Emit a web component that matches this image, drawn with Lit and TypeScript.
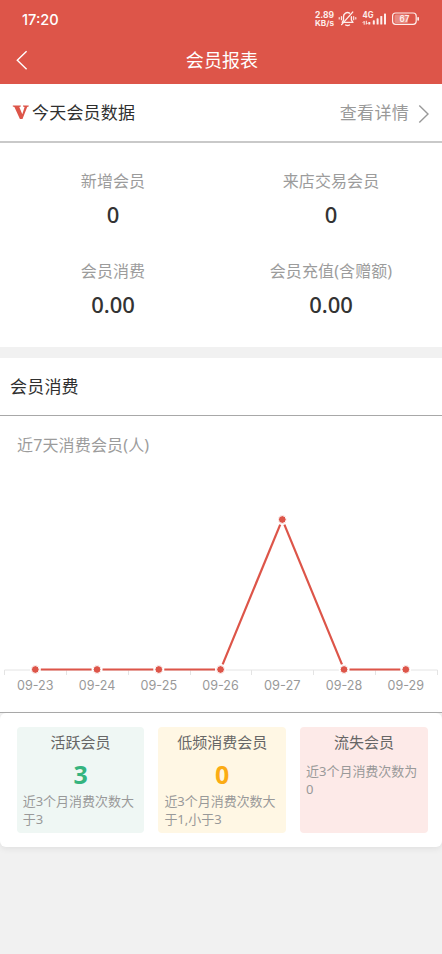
import { LitElement, html, svg, css } from "lit";
import { customElement } from "lit/decorators.js";

const DAYS = [
  { label: "09-23", value: 0 },
  { label: "09-24", value: 0 },
  { label: "09-25", value: 0 },
  { label: "09-26", value: 0 },
  { label: "09-27", value: 1 },
  { label: "09-28", value: 0 },
  { label: "09-29", value: 0 },
];

@customElement("status-bar")
class StatusBar extends LitElement {
  static styles = css`
    :host { display: flex; height: 36px; padding: 2px 23px 0 22px; align-items: center; color: #fff; box-sizing: border-box; }
    .time { flex: 1; font: 500 14.6px/20px Inter, sans-serif; letter-spacing: 0; padding-top: 2px; }
    .icons { display: block; }
    .tiny { font: 700 8.4px Inter, sans-serif; fill: #fdeeec; }
    .unit { font-size: 7.6px; }
    .pct { font: 600 9.4px Inter, sans-serif; fill: #fdeeec; }
  `;
  render() {
    return html`
      <span class="time">17:20</span>
      <svg class="icons" width="107" height="20" viewBox="312 10 107 20" fill="none" stroke="#fdeeec">
        <g stroke="none">
          <text class="tiny" x="315" y="19" textLength="19" lengthAdjust="spacingAndGlyphs">2.89</text>
          <text class="tiny unit" x="315" y="27" textLength="19" lengthAdjust="spacingAndGlyphs">KB/s</text>
          <text class="tiny" x="362.5" y="19" textLength="11" lengthAdjust="spacingAndGlyphs">4G</text>
        </g>
        <g stroke-width="1.4" stroke-linecap="round" stroke-linejoin="round">
          <path d="M342.3 23.4h10.6l-1.5-2.4v-3.3M349.6 14.2a4 4 0 0 0-6.1 3.5v3.3l-1.2 2.4" />
          <path d="M352.7 13.1 341.6 25.6M345.7 26q1.8 1.1 3.8 0" />
          <path d="M341.4 17.6v3.2M339.2 18.5v1.4M353.7 17.6v3.2M355.8 18.5v1.4" stroke-width="1.1" />
        </g>
        <path d="M364.2 25.7v-3.4l-1.5 1.5M366.3 21.8v3.5l1.4-1.4" stroke-width="1" />
        <g fill="#fdeeec" stroke="none">
          <rect x="368.3" y="23" width="2" height="2.6" rx=".6" />
          <rect x="372.8" y="21.3" width="2" height="4.3" rx=".6" />
          <rect x="376.6" y="19.3" width="2" height="6.3" rx=".6" />
          <rect x="380.3" y="16.9" width="2" height="8.7" rx=".6" />
          <rect x="384" y="14.5" width="2" height="11.1" rx=".6" />
          <rect x="394.5" y="15.4" width="13.5" height="8.7" rx="1.5" fill-opacity=".35" />
          <rect x="417.3" y="18" width="1.7" height="3.8" rx=".8" />
        </g>
        <rect x="392.6" y="14" width="23.6" height="11.3" rx="3" stroke-width="1.2" />
        <text class="pct" x="399.5" y="23.2" stroke="none" textLength="9.8" lengthAdjust="spacingAndGlyphs">67</text>
      </svg>
    `;
  }
}

@customElement("visit-chart")
class VisitChart extends LitElement {
  static styles = css`
    :host { display: block; }
    .plot { display: block; }
    .axis { stroke: #e4e4e4; stroke-width: 1; fill: none; }
    .line { stroke: #dd5549; stroke-width: 2.2; }
    .dot { fill: #dd5549; stroke: #fff; stroke-width: 1; }
    .label { font: 400 13px Inter, sans-serif; fill: #999; text-anchor: middle; }
  `;
  render() {
    const pts = DAYS.map((d, i) => ({ ...d, x: 35.3 + i * 61.75, y: 199.5 - d.value * 150 }));
    const segments = pts.slice(1).map((b, i) => {
      const a = pts[i];
      const len = Math.hypot(b.x - a.x, b.y - a.y);
      const dx = ((b.x - a.x) / len) * 5.5;
      const dy = ((b.y - a.y) / len) * 5.5;
      return svg`<line class="line" x1=${a.x + dx} y1=${a.y + dy} x2=${b.x - dx} y2=${b.y - dy} />`;
    });
    return html`<svg class="plot" width="442" height="242" viewBox="0 0 442 242">
      <path class="axis" d="M4.5 200H437.5" />
      ${Array.from({ length: 8 }, (_, i) => svg`<path class="axis" d=${`M${Math.round(4.3 + i * 61.75) + 0.5} 200v5`} />`)}
      ${pts.map((p) => svg`<circle cx=${p.x} cy=${p.y} r="5.3" fill="#fff" />`)}
      ${segments}
      ${pts.map((p) => svg`<circle class="dot" cx=${p.x} cy=${p.y} r="3.9" />
        <text class="label" x=${p.x} y="219.7" textLength="36.5" lengthAdjust="spacingAndGlyphs">${p.label}</text>`)}
    </svg>`;
  }
}

@customElement("app-root")
class AppRoot extends LitElement {
  static styles = css`
    :host { display: block; width: 442px; height: 954px; overflow: hidden; background: #f1f1f1; font-family: "Noto Sans", "Noto Sans CJK SC", sans-serif; color: #333; }
    .top { background: #dd5549; height: 84px; }
    .nav { height: 46px; display: grid; grid-template-columns: 46px 1fr 44px; align-items: center; color: #fff; }
    .title { text-align: center; font: 400 18px/24px "Noto Sans CJK SC", sans-serif; letter-spacing: .1px; }
    .back { display: block; margin: 2px 0 0 15px; }
    .panel { background: #fff; }
    .head { display: flex; align-items: center; height: 59px; box-sizing: border-box; border-bottom: 2px solid #c9c9c9; padding: 0 11px 0 12px; font-size: 17px; line-height: 24px; letter-spacing: .2px; }
    .mark { display: block; margin: -1px 3px 0 0; }
    .grow { flex: 1; color: #2f2f2f; }
    .more { color: #999; letter-spacing: .3px; }
    .chev { margin: 3px 0 0 8px; display: block; }
    .stats { display: grid; grid-template-columns: 226px 210px; grid-auto-rows: 90px; height: 204px; padding-top: 27px; box-sizing: border-box; }
    .stat { text-align: center; }
    .name { font-size: 16px; line-height: 22px; color: #9c9c9c; letter-spacing: .1px; }
    .num { font-weight: 500; font-size: 22px; line-height: 28px; margin-top: 8px; }
    .second { margin-top: 11px; }
    .second .head { padding-left: 10px; border-bottom: 1px solid #a8a8a8; height: 58px; }
    .sub { height: 54px; padding: 18px 0 0 17px; box-sizing: border-box; font-size: 16px; line-height: 22px; color: #9c9c9c; letter-spacing: .15px; }
    .divide { height: 1px; background: #ababab; }
    .cards { display: grid; grid-template-columns: repeat(3, 127.7px); gap: 14px; padding: 14px 0 14px 16.7px; background: #fff; border-radius: 6px; box-shadow: 0 2px 6px #00000012; }
    .card { height: 106px; box-sizing: border-box; border-radius: 4px; padding: 4px 6px 0; }
    .green { background: #eff7f4; }
    .yellow { background: #fff7e4; }
    .red { background: #fdeae8; }
    .kind { font-size: 15px; line-height: 22px; text-align: center; color: #666; }
    .count { font: 700 25px/30px "Noto Sans", sans-serif; text-align: center; margin: 6px 0 4px; }
    .green .count { color: #35b47e; }
    .yellow .count { color: #fbac14; }
    .note { font-size: 13px; line-height: 17.5px; color: #999; letter-spacing: -.03px; white-space: nowrap; margin-top: 10px; }
    .count + .note { margin-top: 0; }
  `;
  private stat(name: string, value: string) {
    return html`<div class="stat"><div class="name">${name}</div><div class="num">${value}</div></div>`;
  }
  private card(tone: string, kind: string, count: string, first: string, rest: string) {
    return html`<div class="card ${tone}">
      <div class="kind">${kind}</div>
      ${count ? html`<div class="count">${count}</div>` : null}
      <div class="note">${first}<br />${rest}</div>
    </div>`;
  }
  render() {
    return html`
      <header class="top">
        <status-bar></status-bar>
        <div class="nav">
          <svg class="back" width="14" height="20" viewBox="0 0 14 20" fill="none" stroke="#fff" stroke-width="1.4"><path d="M11.6 1.2 2.3 10.2l9.3 9" /></svg>
          <span class="title">会员报表</span>
        </div>
      </header>
      <section class="panel">
        <div class="head">
          <svg class="mark" width="17" height="16" viewBox="0 0 17 16"><path fill="#dd5549" d="M.8 1.4h8v1.2l-1.5.3 3 7.3 2.3-7.2-1.6-.4V1.4h5.7v1.2l-1.5.4-4.7 12H7.9L2.4 2.9.8 2.6z" /></svg>
          <span class="grow">今天会员数据</span>
          <span class="more">查看详情</span>
          <svg class="chev" width="14" height="20" viewBox="0 0 14 20" fill="none" stroke="#999" stroke-width="1.4"><path d="M2.3 1.5 11 10 2.3 18.6" /></svg>
        </div>
        <div class="stats">
          ${this.stat("新增会员", "0")} ${this.stat("来店交易会员", "0")}
          ${this.stat("会员消费", "0.00")} ${this.stat("会员充值(含赠额)", "0.00")}
        </div>
      </section>
      <section class="panel second">
        <div class="head"><span class="grow">会员消费</span></div>
        <div class="sub">近7天消费会员(人)</div>
        <visit-chart></visit-chart>
        <div class="divide"></div>
      </section>
      <section class="cards">
        ${this.card("green", "活跃会员", "3", "近3个月消费次数大", "于3")}
        ${this.card("yellow", "低频消费会员", "0", "近3个月消费次数大", "于1,小于3")}
        ${this.card("red", "流失会员", "", "近3个月消费次数为", "0")}
      </section>
    `;
  }
}
